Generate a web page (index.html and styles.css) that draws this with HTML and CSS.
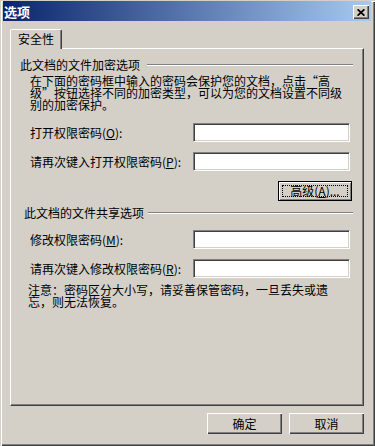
FILE: index.html
```html
<!DOCTYPE html>
<html lang="zh-CN">
<head>
<meta charset="utf-8">
<title>选项</title>
<link rel="stylesheet" href="styles.css">
</head>
<body>
<div class="window">
  <div class="titlebar">
    <span class="title">选项</span>
    <button class="close" aria-label="关闭">
      <svg width="8" height="7" viewBox="0 0 8 7"><path d="M0.6 0.3 L7.4 6.7 M7.4 0.3 L0.6 6.7" stroke="#000" stroke-width="1.7" fill="none"/></svg>
    </button>
  </div>
  <div class="body">
    <div class="tabs"><div class="tab">安全性</div></div>
    <div class="panel">
      <div class="group-head g1"><span>此文档的文件加密选项</span><i class="etch"></i></div>
      <p class="desc">在下面的密码框中输入的密码会保护您的文档，点击“高<br>级”按钮选择不同的加密类型，可以为您的文档设置不同级<br>别的加密保护。</p>
      <div class="row r1"><label>打开权限密码(<u>O</u>):</label><input type="password" class="field"></div>
      <div class="row r2"><label>请再次键入打开权限密码(<u>P</u>):</label><input type="password" class="field"></div>
      <div class="btn-row"><button class="btn default"><span class="focus">高级(<u>A</u>)...</span></button></div>
      <div class="group-head g2"><span>此文档的文件共享选项</span><i class="etch"></i></div>
      <div class="row r3"><label>修改权限密码(<u>M</u>):</label><input type="password" class="field"></div>
      <div class="row r4"><label>请再次键入修改权限密码(<u>R</u>):</label><input type="password" class="field"></div>
      <p class="note">注意：密码区分大小写，请妥善保管密码，一旦丢失或遗<br>忘，则无法恢复。</p>
    </div>
    <div class="footer">
      <button class="btn">确定</button>
      <button class="btn">取消</button>
    </div>
  </div>
</div>
</body>
</html>
```
FILE: styles.css
```css
html, body {
  margin: 0;
  padding: 0;
  background: #d4d0c8;
}
body {
  font-family: "Noto Sans CJK SC", "Liberation Sans", sans-serif;
  font-size: 12px;
  color: #000;
}
.window {
  width: 375px;
  height: 446px;
  box-sizing: border-box;
  padding: 1px 4px 4px 3px;
  background: #d4d0c8;
  box-shadow: inset 1px 1px #d4d0c8, inset 2px 2px #ffffff, inset -1px -1px #404040, inset -2px -2px #808080;
}
.titlebar {
  height: 20px;
  display: flex;
  align-items: center;
  justify-content: space-between;
  padding: 0 2px 0 1px;
  background: linear-gradient(to right, #0a246a, #a6caf0);
}
.title {
  color: #fff;
  font-weight: bold;
  font-size: 13px;
  line-height: 20px;
  padding-top: 1px;
}
.close {
  width: 16px;
  height: 14px;
  padding: 0;
  margin-top: 2px;
  border: 0;
  background: #d4d0c8;
  box-shadow: inset 1px 1px #ffffff, inset -1px -1px #404040, inset -2px -2px #808080;
  display: flex;
  align-items: center;
  justify-content: center;
}
.close svg { display: block; margin-left: -1px; }
.body {
  padding-left: 7px;
}
.tabs {
  display: flex;
  margin-top: 8px;
}
.tab {
  position: relative;
  z-index: 1;
  width: 52px;
  height: 20px;
  box-sizing: border-box;
  margin-bottom: -1px;
  border-top: 1px solid #fff;
  border-left: 1px solid #fff;
  border-right: 1px solid #404040;
  border-radius: 2px 2px 0 0;
  box-shadow: inset -1px 0 #808080;
  background: #d4d0c8;
  text-align: center;
  line-height: 18px;
}
.panel {
  width: 354px;
  height: 358px;
  box-sizing: border-box;
  border-top: 1px solid #fff;
  border-left: 1px solid #fff;
  border-right: 1px solid #404040;
  border-bottom: 1px solid #404040;
  box-shadow: inset -1px -1px #808080;
}
.group-head {
  display: flex;
  align-items: center;
  height: 12px;
  line-height: 12px;
  white-space: nowrap;
}
.group-head .etch {
  flex: 1;
  height: 0;
  border-top: 1px solid #808080;
  border-bottom: 1px solid #fff;
  margin-right: 10px;
}
.g1 { margin-top: 10px; padding-left: 9px; }
.g1 .etch { margin-left: 7px; }
.g2 { margin-top: 6px; padding-left: 13px; }
.g2 .etch { margin-left: 4px; }
.desc, .note {
  margin: 0;
  line-height: 12px;
  white-space: nowrap;
}
.desc { margin-top: 4px; padding-left: 19px; }
.note { margin-top: 6px; padding-left: 17px; }
.row {
  display: flex;
  align-items: center;
  height: 19px;
  padding-left: 19px;
}
.row label {
  width: 163px;
  white-space: nowrap;
}
.r1 { margin-top: 12px; }
.r2 { margin-top: 10px; }
.r3 { margin-top: 11px; }
.r4 { margin-top: 10px; }
.field {
  width: 157px;
  height: 19px;
  box-sizing: border-box;
  margin: 0;
  padding: 0 3px;
  background: #fff;
  border: 1px solid;
  border-color: #808080 #fff #fff #808080;
  box-shadow: inset 1px 1px #404040, inset -1px -1px #d4d0c8;
  outline: none;
}
.btn-row {
  display: flex;
  justify-content: flex-end;
  margin-top: 10px;
  padding-right: 11px;
}
.btn {
  font-family: inherit;
  font-size: 12px;
  color: #000;
  background: #d4d0c8;
  border: 0;
  padding: 0;
  box-sizing: border-box;
  box-shadow: inset 1px 1px #ffffff, inset -1px -1px #404040, inset -2px -2px #808080;
}
.btn.default {
  width: 74px;
  height: 20px;
  border: 1px solid #000;
  box-shadow: inset 1px 1px #ffffff, inset -1px -1px #808080;
  padding: 3px;
  display: flex;
}
.focus {
  flex: 1;
  border: 1px dotted #000;
  line-height: 10px;
  text-align: center;
  white-space: nowrap;
}
.footer {
  width: 354px;
  display: flex;
  justify-content: flex-end;
  gap: 7px;
  margin-top: 7px;
}
.footer .btn {
  width: 75px;
  height: 21px;
  line-height: 21px;
}
```
